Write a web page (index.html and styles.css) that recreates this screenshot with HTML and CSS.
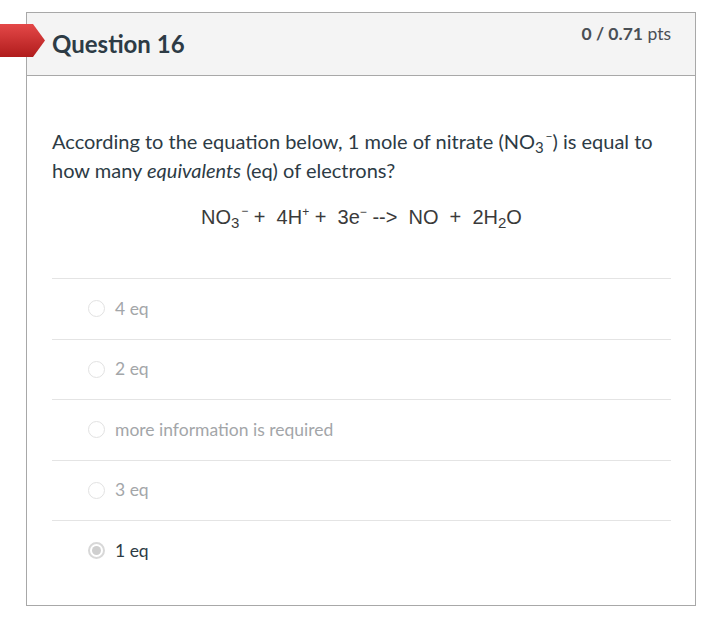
FILE: index.html
```html
<!DOCTYPE html>
<html>
<head>
<meta charset="utf-8">
<link rel="stylesheet" href="styles.css">
</head>
<body>
<div class="page">
  <svg class="flag" width="46" height="34" viewBox="0 0 46 34">
    <defs>
      <linearGradient id="g" x1="0" y1="0" x2="0" y2="1">
        <stop offset="0" stop-color="#e44848"/>
        <stop offset="1" stop-color="#b01c1c"/>
      </linearGradient>
    </defs>
    <polygon points="0,0 33,0 45,16.5 33,33 0,33" fill="url(#g)"/>
  </svg>
  <div class="card">
    <div class="card-header">
      <h2 class="title">Question 16</h2>
      <div class="points"><b>0 / 0.71</b> pts</div>
    </div>
    <div class="card-body">
      <p class="question">According to the equation below, 1 mole of nitrate (NO<sub class="b">3</sub><sup class="m">−</sup>) is equal to how many <em>equivalents</em> (eq) of electrons?</p>
      <p class="equation">NO<sub class="b">3</sub><sup class="m">−</sup>&nbsp;+&nbsp; 4H<sup class="s">+</sup>&nbsp;+&nbsp; 3e<sup class="s">−</sup>&nbsp;--&gt;&nbsp; NO&nbsp; +&nbsp; 2H<sub class="b">2</sub>O</p>
      <div class="answers">
        <div class="answer"><span class="radio"></span><span class="label">4 eq</span></div>
        <div class="answer"><span class="radio"></span><span class="label">2 eq</span></div>
        <div class="answer"><span class="radio"></span><span class="label">more information is required</span></div>
        <div class="answer"><span class="radio"></span><span class="label">3 eq</span></div>
        <div class="answer selected"><span class="radio"><span class="dot"></span></span><span class="label">1 eq</span></div>
      </div>
    </div>
  </div>
</div>
</body>
</html>
```

FILE: styles.css
```css
html, body {
  margin: 0;
  padding: 0;
  background: #ffffff;
}

.page {
  position: relative;
  padding: 12px 0 0 26px;
  font-family: Lato, "Noto Sans", sans-serif;
  color: #2d3b45;
}

.flag {
  position: absolute;
  left: 0;
  top: 24px;
}

.card {
  box-sizing: border-box;
  width: 670px;
  height: 594px;
  border: 1px solid #a8a8a8;
}

.card-header {
  box-sizing: border-box;
  height: 63px;
  background: #f4f4f4;
  border-bottom: 1px solid #a8a8a8;
  display: flex;
  justify-content: space-between;
  align-items: flex-start;
  padding: 0 24px 0 25px;
}

.title {
  margin: 0;
  padding-top: 18px;
  font-size: 24px;
  font-weight: 700;
  line-height: 26px;
  color: #2d3b45;
}

.points {
  padding-top: 10px;
  font-size: 17.5px;
  line-height: 22px;
  color: #4a4f55;
  font-weight: 400;
}

.points b {
  font-weight: 700;
}

.card-body {
  padding: 51px 24px 0 25px;
}

.question {
  margin: 0;
  font-size: 20px;
  line-height: 29px;
  color: #2d3b45;
}

.equation {
  margin: 18px 0 0 0;
  text-align: center;
  font-family: "Liberation Sans", Arial, sans-serif;
  font-size: 20px;
  line-height: 29px;
  color: #3a3a3a;
}

.b {
  font-size: 0.75em;
  line-height: 0;
  vertical-align: -0.25em;
}

.s {
  font-size: 0.6em;
  line-height: 0;
  vertical-align: 0.7em;
}

.m {
  font-size: 0.6em;
  line-height: 0;
  vertical-align: 0.75em;
  margin-left: 0.15em;
}

.answers {
  margin-top: 46px;
}

.answer {
  box-sizing: border-box;
  height: 60.5px;
  border-top: 1px solid #e4e4e4;
  display: flex;
  align-items: center;
  padding-left: 36px;
}

.radio {
  box-sizing: border-box;
  width: 17px;
  height: 17px;
  border-radius: 50%;
  border: 1px solid #e2e2e2;
  background: #ffffff;
  margin-right: 10px;
  display: flex;
  align-items: center;
  justify-content: center;
}

.label {
  font-size: 17.5px;
  line-height: 22px;
  color: #a3a6a9;
}

.selected .radio {
  border: 2px solid #d8d8d8;
}

.dot {
  width: 9px;
  height: 9px;
  border-radius: 50%;
  background: #cfcfcf;
}

.selected .label {
  color: #2d3b45;
}
```
